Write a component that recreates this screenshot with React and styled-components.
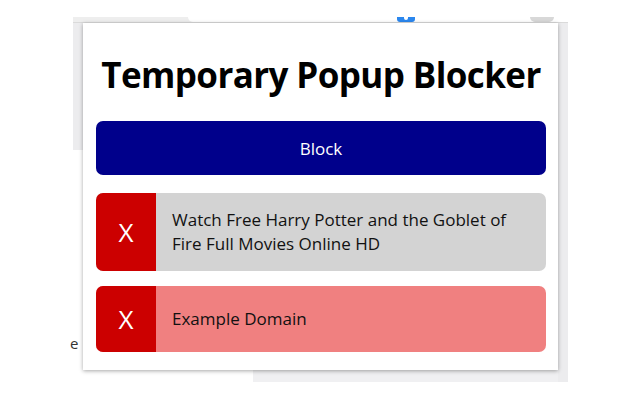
import React from "react";
import styled, { createGlobalStyle } from "styled-components";

const Global = createGlobalStyle`
  html, body { margin: 0; padding: 0; background: #ffffff; }
  body { font-family: "Open Sans", "Noto Sans", sans-serif; }
`;

const Screen = styled.div`
  position: relative;
  width: 640px;
  height: 400px;
  overflow: hidden;
  background: #ffffff;
`;

const Backdrop = styled.div`
  margin: 17px 0 0 73px;
  width: 495px;
  height: 365px;
  display: flex;
  flex-direction: column;
  background:
    linear-gradient(#ececee, #ececee) 0 0 / 10px 133px no-repeat,
    linear-gradient(#ececee, #ececee) 100% 0 / 10px 100% no-repeat,
    linear-gradient(#f0f0f2, #f0f0f2) 180px 353px / 315px 12px no-repeat,
    #ffffff;
`;

const TopBand = styled.div`
  display: flex;
  height: 5px;
  border-bottom: 1px solid #dadada;
  background: #eeeeee;
`;

const TabPart = styled.div`
  width: 115px;
  background: #eeeeee;
`;

const AddressPart = styled.div`
  flex: 1;
  display: flex;
  background: #ffffff;
  border-bottom-left-radius: 6px;
`;

const Badge = styled.div`
  margin-left: 209px;
  width: 18px;
  height: 5px;
  background: #2b87ee;
  border-radius: 0 0 3px 3px;
  display: flex;
  justify-content: center;
  &::after {
    content: "";
    width: 4px;
    height: 3px;
    background: #ffffff;
    border-radius: 0 0 2px 2px;
  }
`;

const Circle = styled.div`
  margin-left: auto;
  margin-right: 14px;
  width: 24px;
  height: 5px;
  background: #d8d8d8;
  border-radius: 0 0 12px 12px;
`;

const PageText = styled.div`
  margin: 312px 0 0 -3px;
  font-size: 15px;
  line-height: 16px;
  color: #333;
`;

const Popup = styled.div`
  position: absolute;
  left: 83px;
  top: 23px;
  width: 475px;
  box-sizing: border-box;
  padding: 27px 12px 18px 13px;
  background: #ffffff;
  box-shadow: 0 1px 4px rgba(0, 0, 0, 0.35);
  display: flex;
  flex-direction: column;
`;

const Title = styled.h1`
  margin: 0 0 22px;
  text-align: center;
  white-space: nowrap;
  font-family: "Open Sans", sans-serif;
  font-weight: 700;
  font-size: 35px;
  letter-spacing: -0.6px;
  line-height: 49px;
  color: #000;
`;

const BlockButton = styled.button`
  flex: none;
  height: 54px;
  margin: 0 0 18px;
  border: none;
  border-radius: 7px;
  background: #00008b;
  color: #ffffff;
  font-family: "Open Sans", sans-serif;
  font-size: 17px;
  cursor: pointer;
`;

const Row = styled.div`
  flex: none;
  display: flex;
  margin-bottom: ${(p) => p.$gap || 0}px;
  border-radius: 7px;
  overflow: hidden;
  background: ${(p) => p.$bg};
`;

const Close = styled.div`
  width: 60px;
  flex: none;
  display: flex;
  align-items: center;
  justify-content: center;
  padding: 15px 0;
  background: #cc0000;
  color: #ffffff;
  font-size: 26px;
  line-height: 36px;
`;

const Label = styled.div`
  flex: 1;
  display: flex;
  align-items: center;
  padding: 15px 16px;
  font-size: 17px;
  line-height: 24px;
  color: #111;
`;

const items = [
  { title: "Watch Free Harry Potter and the Goblet of Fire Full Movies Online HD", bg: "#d3d3d3" },
  { title: "Example Domain", bg: "#f08080" },
];

export default function App() {
  return (
    <>
      <Global />
      <Screen>
        <Backdrop>
          <TopBand>
            <TabPart />
            <AddressPart>
              <Badge />
              <Circle />
            </AddressPart>
          </TopBand>
          <PageText>e</PageText>
        </Backdrop>
        <Popup>
          <Title>Temporary Popup Blocker</Title>
          <BlockButton>Block</BlockButton>
          {items.map((it, i) => (
            <Row key={i} $bg={it.bg} $gap={i === 0 ? 15 : 0}>
              <Close>X</Close>
              <Label>{it.title}</Label>
            </Row>
          ))}
        </Popup>
      </Screen>
    </>
  );
}
